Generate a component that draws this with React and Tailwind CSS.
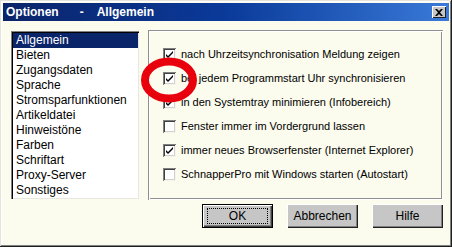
import React from "react";

const pages = [
  "Allgemein",
  "Bieten",
  "Zugangsdaten",
  "Sprache",
  "Stromsparfunktionen",
  "Artikeldatei",
  "Hinweistöne",
  "Farben",
  "Schriftart",
  "Proxy-Server",
  "Sonstiges",
];

const options = [
  { label: "nach Uhrzeitsynchronisation Meldung zeigen", checked: true },
  { label: "bei jedem Programmstart Uhr synchronisieren", checked: true },
  { label: "in den Systemtray minimieren (Infobereich)", checked: true },
  { label: "Fenster immer im Vordergrund lassen", checked: false },
  { label: "immer neues Browserfenster (Internet Explorer)", checked: true },
  { label: "SchnapperPro mit Windows starten (Autostart)", checked: false },
];

function CheckBox({ checked }) {
  return (
    <div className="flex h-[13px] w-[13px] shrink-0 items-center justify-center bg-white shadow-[inset_1px_1px_0_#808080,inset_-1px_-1px_0_#f4f4f0,inset_2px_2px_0_#404040,inset_-2px_-2px_0_#d4d0c8]">
      {checked && (
        <svg width="9" height="9" viewBox="0 0 9 9">
          <path d="M1 4 L3 6 L8 1 L8 3 L3 8 L1 6 Z" fill="#000" />
        </svg>
      )}
    </div>
  );
}

function Button({ children, focused }) {
  return (
    <button
      className={
        "flex h-[24px] w-[71px] items-center justify-center bg-[#c6c6c6] text-[12px] text-black " +
        (focused
          ? "border border-black shadow-[inset_1px_1px_0_#ffffff,inset_-1px_-1px_0_#404040,inset_-2px_-2px_0_#808080]"
          : "shadow-[inset_1px_1px_0_#ffffff,inset_-1px_-1px_0_#202020,inset_-2px_-2px_0_#808080]")
      }
    >
      {focused ? (
        <span className="flex h-[16px] w-[61px] items-center justify-center border border-dotted border-black">
          {children}
        </span>
      ) : (
        children
      )}
    </button>
  );
}

export default function App() {
  return (
    <div className="relative h-[247px] w-[452px] overflow-hidden bg-[#fbfbee] font-['Liberation_Sans',Arial,sans-serif] text-black shadow-[inset_-1px_-1px_0_#202020,inset_1px_1px_0_#e4e4dc,inset_-2px_-2px_0_#808080,inset_2px_2px_0_#ffffff]">
      {/* title bar */}
      <div className="mx-[3px] mt-[3px] flex h-[18px] items-center justify-between bg-gradient-to-r from-[#0a246a] via-[#0a3a9a] to-[#3a7ad8] pl-[3px] pr-[3px]">
        <div className="flex items-center text-[12px] font-bold leading-none text-white">
          <span>Optionen</span>
          <span className="ml-[21px]">-</span>
          <span className="ml-[13px]">Allgemein</span>
        </div>
        <div className="flex h-[12px] w-[14px] items-center justify-center bg-[#c6c6c6] shadow-[inset_1px_1px_0_#ffffff,inset_-1px_-1px_0_#202020]">
          <svg width="8" height="7" viewBox="0 0 8 7">
            <path d="M0 0 L2 0 L4 2 L6 0 L8 0 L5 3.5 L8 7 L6 7 L4 5 L2 7 L0 7 L3 3.5 Z" fill="#000" />
          </svg>
        </div>
      </div>

      <div className="ml-[11px] mt-[10px] flex gap-[9px]">
        {/* page list */}
        <div className="h-[168px] w-[128px] bg-white py-[2px] pl-[2px] pr-[1px] shadow-[inset_1px_1px_0_#808080,inset_2px_2px_0_#000000,inset_-1px_-1px_0_#e8e8e0]">
          {pages.map((p, i) => (
            <div
              key={p}
              className={
                "h-[15px] pl-[3px] text-[12px] leading-[15px] " +
                (i === 0 ? "bg-[#0a246a] text-white" : "")
              }
            >
              {p}
            </div>
          ))}
        </div>

        {/* options group */}
        <div className="-mt-[1px] flex h-[170px] w-[295px] flex-col gap-[11px] pl-[15px] pt-[18px] shadow-[inset_1px_1px_0_#909090,inset_2px_2px_0_#ffffff,inset_-1px_-1px_0_#ffffff,inset_-2px_-2px_0_#909090]">
          {options.map((o) => (
            <div key={o.label} className="flex h-[13px] items-center gap-[5px] text-[11px]">
              <CheckBox checked={o.checked} />
              <span>{o.label}</span>
            </div>
          ))}
        </div>
      </div>

      <div className="mr-[9px] mt-[4px] flex justify-end gap-[14px]">
        <Button focused>OK</Button>
        <Button>Abbrechen</Button>
        <Button>Hilfe</Button>
      </div>

      {/* red marker ring */}
      <svg className="pointer-events-none absolute left-[140px] top-[57px]" width="60" height="46" viewBox="0 0 60 46">
        <ellipse cx="29" cy="23" rx="24" ry="18.5" fill="none" stroke="#e8000c" strokeWidth="8" />
      </svg>
    </div>
  );
}
